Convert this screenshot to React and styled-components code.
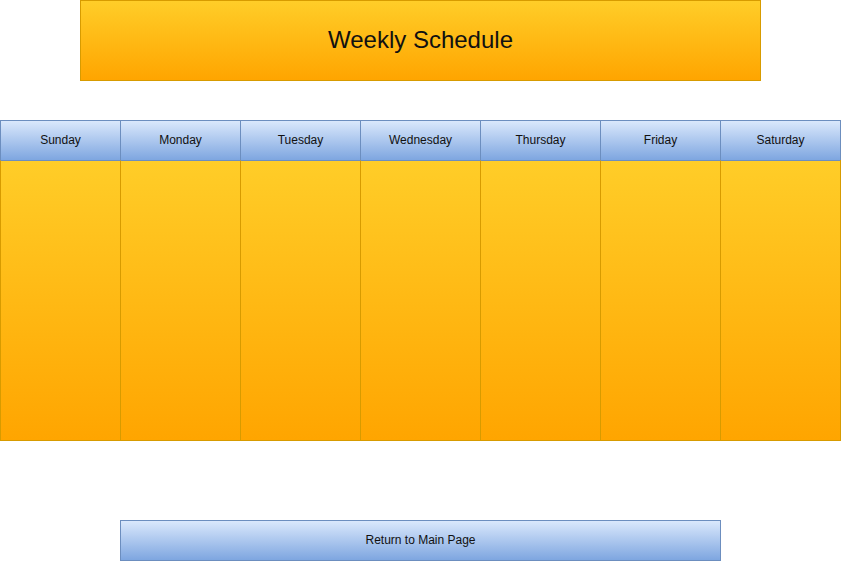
import React from "react";
import styled, { createGlobalStyle } from "styled-components";

const Global = createGlobalStyle`
  html, body { margin: 0; padding: 0; background: #ffffff; }
  body { font-family: "Liberation Sans", Arial, Helvetica, sans-serif; color: #000; }
  * { box-sizing: border-box; }
`;

const Page = styled.div`
  width: 841px;
  height: 561px;
  display: flex;
  flex-direction: column;
  overflow: hidden;
`;

const Title = styled.div`
  margin-left: 80px;
  width: 681px;
  height: 81px;
  padding-bottom: 2px;
  border: 1px solid #d79b00;
  background: linear-gradient(to bottom, #ffcd28, #ffa500);
  display: flex;
  align-items: center;
  justify-content: center;
  font-size: 24px;
  color: #111;
`;

const Table = styled.div`
  margin-top: 39px;
  width: 841px;
  display: grid;
  grid-template-columns: repeat(7, 120px) 1px;
`;

const Column = styled.div`
  display: flex;
  flex-direction: column;
`;

const Head = styled.div`
  height: 40px;
  padding-bottom: 2px;
  border-top: 1px solid #6c8ebf;
  border-left: 1px solid #6c8ebf;
  background: linear-gradient(to bottom, #dae8fc, #7ea6e0);
  display: flex;
  align-items: center;
  justify-content: center;
  font-size: 12px;
  color: #111;
`;

const Body = styled.div`
  height: 281px;
  border-top: 1px solid #6c8ebf;
  border-left: 1px solid #d79b00;
  border-bottom: 1px solid #d79b00;
  background: linear-gradient(to bottom, #ffcd28, #ffa500);
`;

const EdgeColumn = styled.div`
  display: flex;
  flex-direction: column;
`;

const EdgeHead = styled.div`
  height: 40px;
  background: #6c8ebf;
`;

const EdgeBody = styled.div`
  height: 281px;
  background: #d79b00;
`;

const Button = styled.button`
  margin-top: 79px;
  margin-left: 120px;
  width: 601px;
  height: 41px;
  border: 1px solid #6c8ebf;
  background: linear-gradient(to bottom, #dae8fc, #7ea6e0);
  font-family: "Liberation Sans", Arial, Helvetica, sans-serif;
  font-size: 12px;
  color: #111;
  padding: 0 0 2px 0;
  cursor: pointer;
`;

const days = ["Sunday", "Monday", "Tuesday", "Wednesday", "Thursday", "Friday", "Saturday"];

export default function App() {
  return (
    <>
      <Global />
      <Page>
        <Title>Weekly Schedule</Title>
        <Table>
          {days.map((d) => (
            <Column key={d}>
              <Head>{d}</Head>
              <Body />
            </Column>
          ))}
          <EdgeColumn>
            <EdgeHead />
            <EdgeBody />
          </EdgeColumn>
        </Table>
        <Button>Return to Main Page</Button>
      </Page>
    </>
  );
}
